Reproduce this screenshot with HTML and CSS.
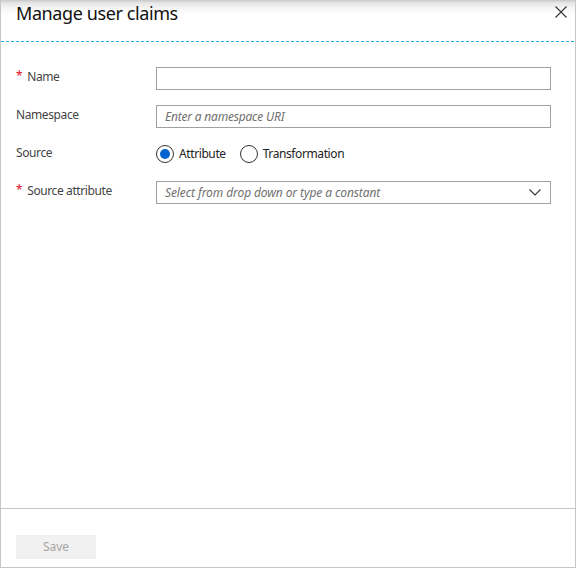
FILE: index.html
```html
<!DOCTYPE html>
<html lang="en">
<head>
<meta charset="utf-8">
<title>Manage user claims</title>
<link rel="stylesheet" href="styles.css">
</head>
<body>
<div class="panel">
  <header class="panel-header">
    <h1 class="panel-title">Manage user claims</h1>
    <button class="close-btn" aria-label="Close">
      <svg width="12" height="12" viewBox="0 0 12 12"><path d="M0.5 0.5 L11.5 11.5 M11.5 0.5 L0.5 11.5" stroke="#333" stroke-width="1.1" fill="none"/></svg>
    </button>
  </header>
  <div class="divider"></div>
  <main class="panel-body">
    <div class="form-row">
      <label class="field-label"><span class="req">*</span>Name</label>
      <div class="field"><input class="text-input" type="text"></div>
    </div>
    <div class="form-row">
      <label class="field-label">Namespace</label>
      <div class="field"><input class="text-input" type="text" placeholder="Enter a namespace URI"></div>
    </div>
    <div class="form-row">
      <label class="field-label">Source</label>
      <div class="field radios">
        <label class="radio"><span class="radio-circle checked"></span>Attribute</label>
        <label class="radio"><span class="radio-circle"></span>Transformation</label>
      </div>
    </div>
    <div class="form-row">
      <label class="field-label"><span class="req">*</span>Source attribute</label>
      <div class="field">
        <div class="dropdown">
          <span class="dropdown-placeholder">Select from drop down or type a constant</span>
          <svg class="chevron" width="12" height="7" viewBox="0 0 12 7"><path d="M0.5 0.5 L6 6 L11.5 0.5" stroke="#333" stroke-width="1.1" fill="none"/></svg>
        </div>
      </div>
    </div>
  </main>
  <footer class="panel-footer">
    <button class="save-btn" disabled>Save</button>
  </footer>
</div>
</body>
</html>
```
FILE: styles.css
```css
* { box-sizing: border-box; }
html, body { margin: 0; padding: 0; }
body {
  width: 576px;
  height: 568px;
  font-family: "Noto Sans", "Open Sans", sans-serif;
  color: #333;
  background: #fff;
}
.panel {
  width: 576px;
  height: 568px;
  display: flex;
  flex-direction: column;
  border: 1px solid #c6c6c6;
  border-top: none;
  background: linear-gradient(to bottom, #c8c8c8 0, #e6e6e6 3px, #f7f7f7 9px, #fff 15px);
}
.panel-header {
  height: 41px;
  display: flex;
  align-items: flex-start;
  justify-content: space-between;
  padding: 0 8px 0 15px;
}
.panel-title {
  margin: 0;
  font-size: 18px;
  font-weight: 400;
  line-height: 26px;
  letter-spacing: -0.4px;
  color: #111;
}
.close-btn {
  margin-top: 6px;
  border: none;
  background: none;
  padding: 0;
  width: 12px;
  height: 12px;
  display: flex;
}
.divider {
  height: 1px;
  background: repeating-linear-gradient(to right, #22aee0 0 3px, transparent 3px 5px);
}
.panel-body {
  flex: 1;
  padding: 25px 24px 0 15px;
  display: flex;
  flex-direction: column;
  gap: 15px;
  letter-spacing: -0.4px;
}
.form-row {
  display: flex;
  align-items: flex-start;
  height: 23px;
}
.field-label {
  width: 140px;
  flex: none;
  font-size: 12px;
  line-height: 16px;
  margin-top: 2px;
  color: #444;
}
.req {
  color: #e00b1c;
  margin-right: 5px;
  position: relative;
  top: -1px;
}
.field { flex: 1; }
.text-input {
  width: 395px;
  height: 23px;
  border: 1px solid #a0a0a0;
  border-radius: 0;
  padding: 0 8px;
  font-family: inherit;
  font-size: 12px;
  letter-spacing: -0.2px;
  color: #333;
  outline: none;
  display: block;
}
.text-input::placeholder {
  font-style: italic;
  color: #707070;
}
.radios {
  display: flex;
  align-items: center;
  gap: 14px;
  height: 21px;
}
.radio {
  display: flex;
  align-items: center;
  gap: 5px;
  font-size: 12px;
  color: #222;
}
.radio-circle {
  width: 18px;
  height: 18px;
  border: 1px solid #333;
  border-radius: 50%;
  display: flex;
  align-items: center;
  justify-content: center;
}
.radio-circle.checked::after {
  content: "";
  width: 10px;
  height: 10px;
  border-radius: 50%;
  background: #0063d1;
}
.dropdown {
  width: 395px;
  height: 23px;
  border: 1px solid #a0a0a0;
  display: flex;
  align-items: center;
  justify-content: space-between;
  padding: 0 8px 0 8px;
}
.dropdown-placeholder {
  font-size: 12px;
  font-style: italic;
  letter-spacing: -0.1px;
  color: #707070;
}
.chevron { margin-right: 1px; }
.panel-footer {
  height: 59px;
  border-top: 1px solid #c6c6c6;
  padding: 25px 0 0 15px;
}
.save-btn {
  width: 80px;
  height: 24px;
  border: none;
  background: #f1f1f1;
  color: #a6a6a6;
  font-family: inherit;
  font-size: 12px;
  padding: 0;
}
```
